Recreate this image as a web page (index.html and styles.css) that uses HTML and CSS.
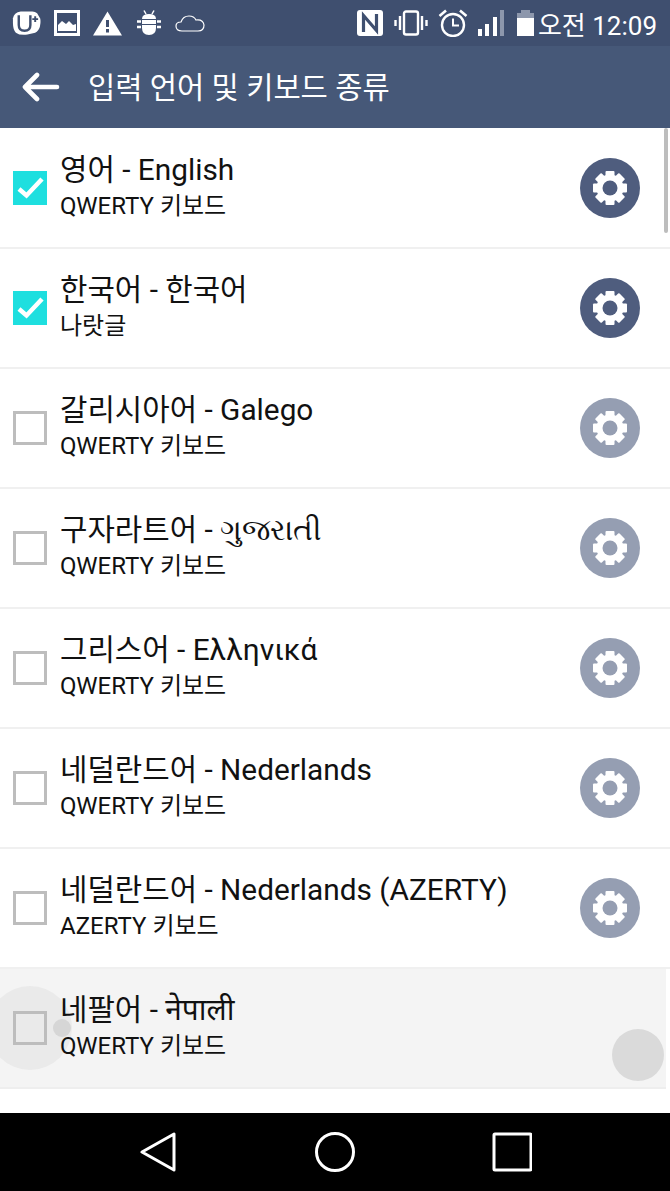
FILE: index.html
```html
<!DOCTYPE html>
<html lang="ko">
<head>
    <meta charset="UTF-8">
    <meta name="viewport" content="width=device-width, initial-scale=1.0">
    <title>입력 언어 및 키보드 종류</title>
    <link rel="stylesheet" href="styles.css">
</head>
<body>
    <!-- shared gear used by every row -->
    <svg class="defs" width="0" height="0">
        <symbol id="gear" viewBox="-30 -30 60 60">
            <circle r="30" class="gear-disc"></circle>
            <circle r="10.5" fill="none" stroke="#fff" stroke-width="6"></circle>
            <g fill="#fff">
                <rect x="-4.5" y="-17" width="9" height="34" rx="1"></rect>
                <rect x="-4.5" y="-17" width="9" height="34" rx="1" transform="rotate(45)"></rect>
                <rect x="-4.5" y="-17" width="9" height="34" rx="1" transform="rotate(90)"></rect>
                <rect x="-4.5" y="-17" width="9" height="34" rx="1" transform="rotate(135)"></rect>
            </g>
            <circle r="7.5" class="gear-disc"></circle>
        </symbol>
    </svg>

    <div class="phone">
        <div class="status-bar">
            <div class="status-left">
                <svg width="29" height="26" viewBox="0 0 30 26">
                    <path d="M9 1 L21 1 Q24 1 26 3 L29 8 Q30 10 29 16 Q28 21 24 23 L16 25 Q8 26 4 23 Q1 20 1 13 L1 8 Q2 2 9 1Z" fill="#fff"></path>
                    <path d="M7 5 V15 Q7 21 13 21 Q19 21 19 15 V5" fill="none" stroke="#3f4f6f" stroke-width="2.5"></path>
                    <path d="M21 9 H27 M24 6 V12" stroke="#3f4f6f" stroke-width="2"></path>
                </svg>
                <svg width="26" height="26" viewBox="0 0 26 26">
                    <rect x="1.5" y="1.5" width="23" height="23" fill="none" stroke="#fff" stroke-width="3"></rect>
                    <path d="M4 21 V15 L8 11 L12 14 L15 11 L19 15 L22 14 V21Z" fill="#fff"></path>
                </svg>
                <svg width="29" height="25" viewBox="0 0 29 25">
                    <path d="M14.5 0.5 L29 24.5 H0Z" fill="#fff"></path>
                    <rect x="13" y="9" width="3" height="7" fill="#3f4f6f"></rect>
                    <rect x="13" y="18" width="3" height="3.5" fill="#3f4f6f"></rect>
                </svg>
                <svg class="gap-android" width="24" height="26" viewBox="0 0 24 26">
                    <path d="M5 9 Q5 4 12 4 Q19 4 19 9Z" fill="#fff"></path>
                    <path d="M5 10 H19 V18 Q19 25 12 25 Q5 25 5 18Z" fill="#fff"></path>
                    <path d="M7 0.5 L9 4 M17 0.5 L15 4" stroke="#fff" stroke-width="1.5"></path>
                    <path d="M0 11.5 H4 M20 11.5 H24 M0 17 H4 M20 17 H24" stroke="#fff" stroke-width="2.5"></path>
                    <rect x="4" y="14" width="16" height="1" fill="#3f4f6f"></rect>
                </svg>
                <svg class="gap-cloud" width="30" height="18" viewBox="0 0 30 18">
                    <path d="M7 17 Q1 17 1 12 Q1 8 6 8 Q8 2 14 2 Q19 2 21 6 Q28 5 29 11 Q29 17 23 17Z" fill="none" stroke="#fff" stroke-width="1.2"></path>
                </svg>
            </div>
            <div class="status-right">
                <svg width="26" height="26" viewBox="0 0 26 26">
                    <rect width="26" height="26" rx="3" fill="#fff"></rect>
                    <path d="M6.5 22 V5.5 L19.5 20.5 V4" fill="none" stroke="#3f4f6f" stroke-width="3.2"></path>
                </svg>
                <svg class="gap-vibrate" width="34" height="26" viewBox="0 0 34 26">
                    <rect x="10" y="1.5" width="14" height="23" rx="2" fill="none" stroke="#fff" stroke-width="2.4"></rect>
                    <path d="M6 6 V20 M28 6 V20" stroke="#fff" stroke-width="2.4"></path>
                    <path d="M1.5 10 V16 M32.5 10 V16" stroke="#fff" stroke-width="2.4"></path>
                </svg>
                <svg class="gap-alarm" width="30" height="28" viewBox="0 0 30 28">
                    <circle cx="15" cy="16" r="11" fill="none" stroke="#fff" stroke-width="2.4"></circle>
                    <path d="M15 9.5 V16.5 H21" fill="none" stroke="#fff" stroke-width="2"></path>
                    <path d="M1.5 7 L8 1.5 M28.5 7 L22 1.5" stroke="#fff" stroke-width="2.6"></path>
                </svg>
                <svg class="gap-signal" width="27" height="26" viewBox="0 0 27 26">
                    <rect x="0" y="19" width="4" height="7" fill="#fff"></rect>
                    <rect x="7" y="14" width="4" height="12" fill="#fff"></rect>
                    <rect x="15" y="7" width="4" height="19" fill="#fff"></rect>
                    <rect x="22" y="0" width="4" height="26" fill="#8d97ac"></rect>
                </svg>
                <svg class="gap-battery" width="17" height="26" viewBox="0 0 17 26">
                    <path d="M0 3 H4 V0 H13 V3 H17 V8 H0Z" fill="#8d97ac"></path>
                    <rect y="8" width="17" height="18" fill="#fff"></rect>
                </svg>
                <span class="clock">오전 12:09</span>
            </div>
        </div>

        <header class="app-bar">
            <svg class="back" width="38" height="30" viewBox="0 0 38 30">
                <path d="M3 15 H35 M15 3 L3 15 L15 27" fill="none" stroke="#fff" stroke-width="4.6" stroke-linecap="round" stroke-linejoin="round"></path>
            </svg>
            <h1 class="app-title">입력 언어 및 키보드 종류</h1>
        </header>

        <main class="lang-list">
            <div class="lang-row is-on">
                <span class="check"><svg width="34" height="34" viewBox="0 0 34 34"><path d="M6 18 L13.5 24.5 L29 8" fill="none" stroke="#fff" stroke-width="4.5"></path></svg></span>
                <div class="lang-text"><div class="lang-name">영어 - English</div><div class="lang-sub">QWERTY 키보드</div></div>
                <svg class="gear"><use href="#gear"></use></svg>
            </div>
            <div class="lang-row is-on">
                <span class="check"><svg width="34" height="34" viewBox="0 0 34 34"><path d="M6 18 L13.5 24.5 L29 8" fill="none" stroke="#fff" stroke-width="4.5"></path></svg></span>
                <div class="lang-text"><div class="lang-name">한국어 - 한국어</div><div class="lang-sub">나랏글</div></div>
                <svg class="gear"><use href="#gear"></use></svg>
            </div>
            <div class="lang-row">
                <span class="check"></span>
                <div class="lang-text"><div class="lang-name">갈리시아어 - Galego</div><div class="lang-sub">QWERTY 키보드</div></div>
                <svg class="gear"><use href="#gear"></use></svg>
            </div>
            <div class="lang-row">
                <span class="check"></span>
                <div class="lang-text"><div class="lang-name">구자라트어 - ગુજરાતી</div><div class="lang-sub">QWERTY 키보드</div></div>
                <svg class="gear"><use href="#gear"></use></svg>
            </div>
            <div class="lang-row">
                <span class="check"></span>
                <div class="lang-text"><div class="lang-name">그리스어 - Ελληνικά</div><div class="lang-sub">QWERTY 키보드</div></div>
                <svg class="gear"><use href="#gear"></use></svg>
            </div>
            <div class="lang-row">
                <span class="check"></span>
                <div class="lang-text"><div class="lang-name">네덜란드어 - Nederlands</div><div class="lang-sub">QWERTY 키보드</div></div>
                <svg class="gear"><use href="#gear"></use></svg>
            </div>
            <div class="lang-row">
                <span class="check"></span>
                <div class="lang-text"><div class="lang-name">네덜란드어 - Nederlands (AZERTY)</div><div class="lang-sub">AZERTY 키보드</div></div>
                <svg class="gear"><use href="#gear"></use></svg>
            </div>
            <div class="lang-row is-pressed">
                <span class="ripple ripple-big"></span>
                <span class="ripple ripple-dot"></span>
                <span class="ripple ripple-end"></span>
                <span class="check"></span>
                <div class="lang-text"><div class="lang-name">네팔어 - नेपाली</div><div class="lang-sub">QWERTY 키보드</div></div>
            </div>
            <span class="scroll-thumb"></span>
        </main>

        <nav class="nav-bar">
            <svg width="36" height="40" viewBox="0 0 36 40">
                <path d="M2 20 L34 2 V38Z" fill="none" stroke="#fff" stroke-width="3" stroke-linejoin="round"></path>
            </svg>
            <svg class="nav-home" width="40" height="40" viewBox="0 0 40 40">
                <circle cx="20" cy="20" r="18.5" fill="none" stroke="#fff" stroke-width="3"></circle>
            </svg>
            <svg class="nav-recent" width="40" height="40" viewBox="0 0 40 40">
                <rect x="2" y="2" width="37" height="36" rx="1" fill="none" stroke="#fff" stroke-width="3"></rect>
            </svg>
        </nav>
    </div>
</body>
</html>
```

FILE: styles.css
```css
* {
    box-sizing: border-box;
}
body {
    margin: 0;
    font-family: Roboto, "Noto Sans CJK KR", "Noto Sans", "DejaVu Sans", sans-serif;
    background: #fff;
}
.defs {
    position: absolute;
}
.phone {
    width: 670px;
    height: 1191px;
    display: flex;
    flex-direction: column;
    overflow: hidden;
}
.status-bar {
    height: 46px;
    flex: none;
    background: #3f4f6f;
    display: flex;
    justify-content: space-between;
    align-items: center;
    padding: 0 13px 0 12px;
}
.status-left {
    display: flex;
    align-items: center;
    gap: 13px;
}
.gap-android {
    margin-left: 2px;
}
.gap-cloud {
    margin-left: 1px;
}
.status-right {
    display: flex;
    align-items: center;
}
.gap-vibrate {
    margin-left: 11px;
}
.gap-alarm {
    margin-left: 10px;
}
.gap-signal {
    margin-left: 10px;
}
.gap-battery {
    margin-left: 12px;
}
.clock {
    margin-left: 4px;
    color: #fff;
    font-size: 26px;
    white-space: nowrap;
}
.app-bar {
    height: 82px;
    flex: none;
    background: #465878;
    display: flex;
    align-items: center;
    padding-left: 22px;
}
.app-title {
    margin: 0 0 3px 28px;
    color: #fff;
    font-size: 29.6px;
    font-weight: 400;
}
.lang-list {
    flex: 1;
    position: relative;
    overflow: hidden;
    padding-top: 1px;
}
.lang-row {
    position: relative;
    height: 120px;
    display: flex;
    align-items: center;
    padding: 0 30px 0 13px;
    border-bottom: 2px solid #f0f0f0;
}
.check {
    width: 34px;
    height: 34px;
    flex: none;
    border: 3px solid #bdbdbd;
    position: relative;
}
.is-on .check {
    background: #1edfdf;
    border: none;
}
.lang-text {
    flex: 1;
    margin-left: 13px;
    margin-top: -6px;
    position: relative;
    color: #111;
}
.lang-name {
    font-size: 29.8px;
    line-height: 42px;
    white-space: nowrap;
}
.lang-sub {
    font-size: 24px;
    line-height: 30px;
    white-space: nowrap;
}
.gear {
    width: 60px;
    height: 60px;
    flex: none;
    color: #959eb2;
}
.gear-disc {
    fill: currentColor;
}
.is-on .gear {
    color: #4f5d7e;
}
.is-pressed {
    background: #f4f4f4;
    margin-right: 4px;
    border-bottom-color: #eee;
}
.ripple {
    position: absolute;
    border-radius: 50%;
}
.ripple-big {
    left: -12px;
    top: 17px;
    width: 84px;
    height: 84px;
    background: #eaeaea;
}
.ripple-dot {
    left: 53px;
    top: 50px;
    width: 18px;
    height: 18px;
    background: #d6d6d6;
}
.ripple-end {
    left: 612px;
    top: 60px;
    width: 52px;
    height: 52px;
    background: #dadada;
}
.scroll-thumb {
    position: absolute;
    top: 0;
    right: 2px;
    width: 4px;
    height: 105px;
    background: #bdbdbd;
    border-radius: 2px;
}
.nav-bar {
    height: 78px;
    flex: none;
    background: #000;
    display: flex;
    align-items: center;
    padding-left: 140px;
}
.nav-home {
    margin-left: 139px;
}
.nav-recent {
    margin-left: 137px;
}
```
